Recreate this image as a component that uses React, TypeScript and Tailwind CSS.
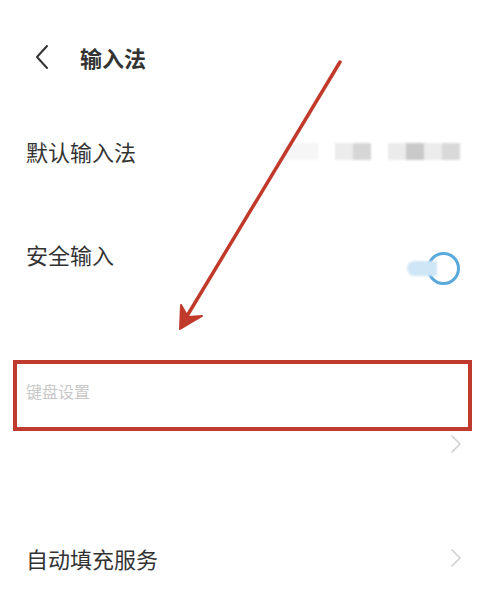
import React from "react";

const font = { fontFamily: '"Noto Sans CJK SC", "Noto Sans", sans-serif' };

function Chevron({ className = "" }: { className?: string }) {
  return (
    <svg width="12" height="20" viewBox="0 0 12 20" className={className}>
      <path d="M2 2 L10 10 L2 18" fill="none" stroke="#cfcfcf" strokeWidth="1.6" strokeLinecap="round" strokeLinejoin="round" />
    </svg>
  );
}

export default function App() {
  return (
    <div className="relative h-[600px] w-[495px] overflow-hidden bg-white text-[#333]" style={font}>
      {/* header */}
      <div className="flex h-[114px] items-center pl-[34px]">
        <svg width="16" height="26" viewBox="0 0 16 26">
          <path d="M13 2 L3 13 L13 24" fill="none" stroke="#333" strokeWidth="2" strokeLinecap="round" strokeLinejoin="round" />
        </svg>
        <span className="ml-[30px] text-[22px] font-bold leading-none">输入法</span>
      </div>

      {/* default input method */}
      <div className="flex h-[74px] items-center justify-between pl-[26px] pr-[35px]">
        <span className="text-[22px] leading-none">默认输入法</span>
        <div className="flex items-center gap-[17px] blur-[1.2px]">
          <div className="h-[17px] w-[36px] bg-[#f6f6f6]" />
          <div className="flex">
            <div className="h-[17px] w-[18px] bg-[#ececec]" />
            <div className="h-[17px] w-[18px] bg-[#d6d6d6]" />
          </div>
          <div className="flex">
            <div className="h-[17px] w-[18px] bg-[#ebebeb]" />
            <div className="h-[17px] w-[18px] bg-[#c9c9c9]" />
            <div className="h-[17px] w-[18px] bg-[#ececec]" />
            <div className="h-[17px] w-[18px] bg-[#d9d9d9]" />
          </div>
        </div>
      </div>

      {/* secure input */}
      <div className="flex h-[132px] items-center justify-between pl-[26px] pr-[35px]">
        <span className="text-[22px] leading-none">安全输入</span>
        <div className="mt-[28px] flex items-center">
          <div className="h-[15px] w-[30px] rounded-l-full bg-[#cfe6f7] blur-[1px]" />
          <div className="-ml-[10px] h-[33px] w-[33px] rounded-full border-[3px] border-[#5aa9dc] bg-white" />
        </div>
      </div>

      {/* keyboard settings (highlighted) */}
      <div className="ml-[13px] mr-[23px] mt-[40px] h-[71px] border-[4px] border-[#bf3a2f] pl-[9px] pt-[15px]">
        <span className="text-[16px] leading-none text-[#c8c8c8]">键盘设置</span>
      </div>
      <div className="flex justify-end pr-[33px] pt-[3px]">
        <Chevron />
      </div>

      {/* autofill */}
      <div className="mt-[84px] flex h-[40px] items-center justify-between pl-[26px] pr-[33px]">
        <span className="text-[22px] leading-none">自动填充服务</span>
        <Chevron />
      </div>

      {/* annotation arrow */}
      <svg className="pointer-events-none absolute left-0 top-0" width="495" height="600" viewBox="0 0 495 600">
        <line x1="340" y1="62" x2="184" y2="321" stroke="#c0392b" strokeWidth="3.5" strokeLinecap="round" />
        <path d="M180 329 L181 305 L188 317 L202 316 Z" fill="#c0392b" stroke="#c0392b" strokeWidth="2" strokeLinejoin="round" />
      </svg>
    </div>
  );
}
